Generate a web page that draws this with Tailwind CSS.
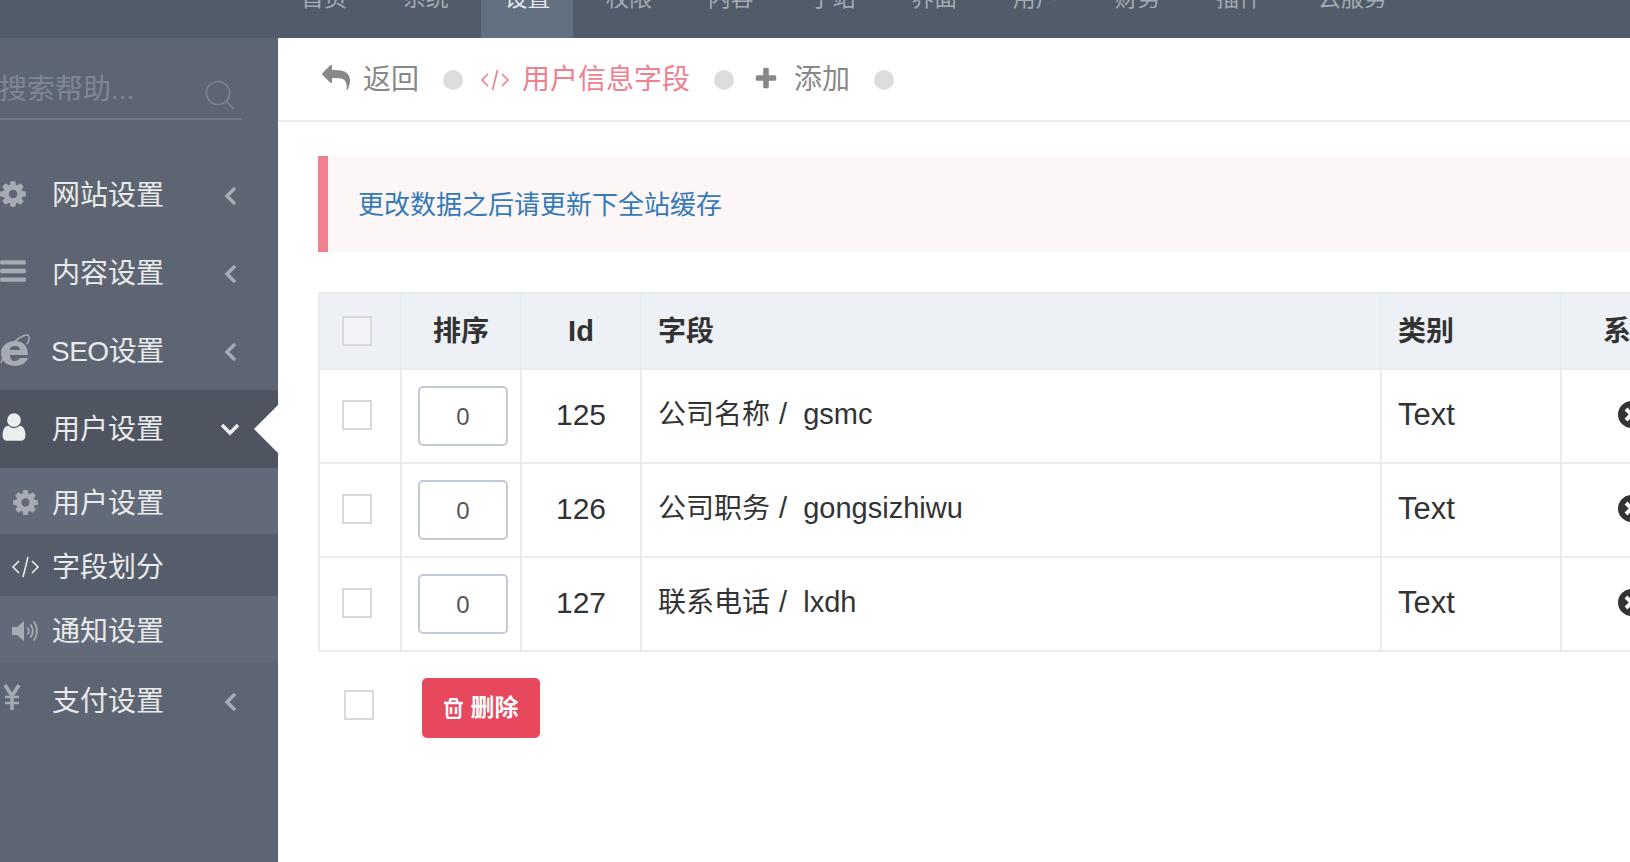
<!DOCTYPE html>
<html lang="zh-CN">
<head>
<meta charset="utf-8">
<title>用户信息字段</title>
<script src="https://cdn.jsdelivr.net/npm/@tailwindcss/browser@4"></script>
</head>
<body class="m-0 bg-white">
<div class="flex flex-col w-[1630px] h-[862px] overflow-hidden font-['Liberation_Sans','Noto_Sans_CJK_SC',sans-serif]">
  <header class="flex h-[38px] shrink-0 overflow-hidden bg-[#515b6a] pl-[278px] gap-[9.7px] text-[23px] text-[#a3aab4]">
    <a class="px-[23px] h-full whitespace-nowrap"><span class="block -mt-[13px] leading-[23px]">首页</span></a>
    <a class="px-[23px] h-full whitespace-nowrap"><span class="block -mt-[13px] leading-[23px]">系统</span></a>
    <a class="px-[23px] h-full whitespace-nowrap bg-[#627082] text-[#e4e6e9]"><span class="block -mt-[13px] leading-[23px]">设置</span></a>
    <a class="px-[23px] h-full whitespace-nowrap"><span class="block -mt-[13px] leading-[23px]">权限</span></a>
    <a class="px-[23px] h-full whitespace-nowrap"><span class="block -mt-[13px] leading-[23px]">内容</span></a>
    <a class="px-[23px] h-full whitespace-nowrap"><span class="block -mt-[13px] leading-[23px]">子站</span></a>
    <a class="px-[23px] h-full whitespace-nowrap"><span class="block -mt-[13px] leading-[23px]">界面</span></a>
    <a class="px-[23px] h-full whitespace-nowrap"><span class="block -mt-[13px] leading-[23px]">用户</span></a>
    <a class="px-[23px] h-full whitespace-nowrap"><span class="block -mt-[13px] leading-[23px]">财务</span></a>
    <a class="px-[23px] h-full whitespace-nowrap"><span class="block -mt-[13px] leading-[23px]">插件</span></a>
    <a class="px-[23px] h-full whitespace-nowrap"><span class="block -mt-[13px] leading-[23px]">云服务</span></a>
  </header>
  <div class="flex flex-1 min-h-0">
    <aside class="w-[278px] shrink-0 bg-[#5e6572] text-[28px] text-[#e8e9eb]">
      <div class="h-[118px] pt-[30px]">
        <div class="flex items-center justify-between w-[242px] h-[52px] border-b-2 border-[#6f7785] pr-[7px]">
          <span class="text-[#7f8794] leading-[40px] -mt-[6px] -ml-[1px]">搜索帮助...</span>
          <svg class="w-[30px] h-[30px] mt-[3px]" viewBox="0 0 30 30" fill="none" stroke="#7c8490" stroke-width="1.5"><circle cx="13" cy="13" r="11.500"/><line x1="21.500" y1="21.500" x2="29" y2="29"/></svg>
        </div>
      </div>
      <a class="flex items-center h-[78px]">
        <span class="w-[52px] shrink-0"><svg class="w-[30px] h-[30px] -ml-[2px] -mt-[3px]" viewBox="0 0 1792 1792" fill="#a6abb4"><path d="M1152 896q0-106-75-181t-181-75-181 75-75 181 75 181 181 75 181-75 75-181zm512-109v222q0 12-8 23t-20 13l-185 28q-19 54-39 91 35 50 107 138 10 12 10 25t-9 23q-27 37-99 108t-94 71q-12 0-26-9l-138-108q-44 23-91 38-16 136-29 186-7 28-36 28h-222q-14 0-24.500-8.500t-11.500-21.500l-28-184q-49-16-90-37l-141 107q-10 9-25 9-14 0-25-11-126-114-165-168-7-10-7-23 0-12 8-23 15-21 51-66.500t54-70.500q-27-50-41-99l-183-27q-13-2-21-12.500t-8-23.500v-222q0-12 8-23t19-13l186-28q14-46 39-92-40-57-107-138-10-12-10-24 0-10 9-23 26-36 98.500-107.500t94.500-71.500q13 0 26 10l138 107q44-23 91-38 16-136 29-186 7-28 36-28h222q14 0 24.500 8.500t11.500 21.500l28 184q49 16 90 37l142-107q9-9 24-9 13 0 25 10 129 119 165 170 7 8 7 22 0 12-8 23-15 21-51 66.500t-54 70.500q26 50 41 98l183 28q13 2 21 12.500t8 23.500z"/></svg></span>
        <span class="flex-1 leading-[40px] mt-[2px]">网站设置</span>
        <svg class="w-[13px] h-[20px] mr-[41px] mt-[2px]" viewBox="0 0 13 20" fill="none" stroke="#a6abb4" stroke-width="3.500"><polyline points="11,2 3,10 11,18"/></svg>
      </a>
      <a class="flex items-center h-[78px]">
        <span class="w-[52px] shrink-0"><svg class="w-[30px] h-[30px] -ml-[2px] -mt-[4px]" viewBox="0 0 1792 1792" fill="#a6abb4"><path d="M1664 1344v128q0 26-19 45t-45 19h-1408q-26 0-45-19t-19-45v-128q0-26 19-45t45-19h1408q26 0 45 19t19 45zm0-512v128q0 26-19 45t-45 19h-1408q-26 0-45-19t-19-45v-128q0-26 19-45t45-19h1408q26 0 45 19t19 45zm0-512v128q0 26-19 45t-45 19h-1408q-26 0-45-19t-19-45v-128q0-26 19-45t45-19h1408q26 0 45 19t19 45z"/></svg></span>
        <span class="flex-1 leading-[40px] mt-[2px]">内容设置</span>
        <svg class="w-[13px] h-[20px] mr-[41px] mt-[2px]" viewBox="0 0 13 20" fill="none" stroke="#a6abb4" stroke-width="3.500"><polyline points="11,2 3,10 11,18"/></svg>
      </a>
      <a class="flex items-center h-[78px]">
        <span class="w-[51px] shrink-0"><svg class="w-[30px] h-[34px] -mt-[2px]" viewBox="0 0 30 34"><path fill="#a6abb4" fill-rule="evenodd" d="M28 22C28 12 22 8 15 8C7 8 1 13 1 20C1 28 7 33 15 33C21 33 26 30 28 25H20C19 27 17 28 15 28C12 28 10 26 10 22ZM10 17C10 14 12 13 15 13C18 13 20 14 20 17Z"/><path fill="none" stroke="#a6abb4" stroke-width="1.500" d="M1 30C6 14 18 4 26 2C30 1 30 7 27 11"/></svg></span>
        <span class="flex-1 leading-[40px] mt-[2px] tracking-[-0.5px]">SEO设置</span>
        <svg class="w-[13px] h-[20px] mr-[41px] mt-[2px]" viewBox="0 0 13 20" fill="none" stroke="#a6abb4" stroke-width="3.500"><polyline points="11,2 3,10 11,18"/></svg>
      </a>
      <a class="relative flex items-center h-[78px] bg-[#4e5560]">
        <span class="w-[52px] shrink-0"><svg class="w-[32px] h-[32px] -ml-[2px] -mt-[4px]" viewBox="0 0 1792 1792" fill="#eceded"><path d="M1536 1399q0 109-62.500 187t-150.500 78h-854q-88 0-150.500-78t-62.500-187q0-85 8.500-160.500t31.500-152 58.500-131 94-89 134.500-34.500q131 128 313 128t313-128q76 0 134.500 34.500t94 89 58.500 131 31.500 152 8.500 160.500zm-256-887q0 159-112.500 271.500t-271.500 112.500-271.500-112.500-112.500-271.500 112.500-271.500 271.500-112.500 271.500 112.500 112.500 271.500z"/></svg></span>
        <span class="flex-1 leading-[40px] mt-[2px]">用户设置</span>
        <svg class="w-[20px] h-[14px] mr-[38px]" viewBox="0 0 20 14" fill="none" stroke="#f1f1f1" stroke-width="3.500"><polyline points="2,3 10,11 18,3"/></svg>
        <span class="absolute right-0 top-[15px] w-0 h-0 border-y-[24px] border-y-transparent border-r-[24px] border-r-white"></span>
      </a>
      <a class="flex items-center h-[66px] pt-[5px] bg-[#626978]">
        <span class="w-[52px] shrink-0 pl-[11px]"><svg class="w-[29px] h-[29px] -mt-[3px]" viewBox="0 0 1792 1792" fill="#a6abb4"><path d="M1152 896q0-106-75-181t-181-75-181 75-75 181 75 181 181 75 181-75 75-181zm512-109v222q0 12-8 23t-20 13l-185 28q-19 54-39 91 35 50 107 138 10 12 10 25t-9 23q-27 37-99 108t-94 71q-12 0-26-9l-138-108q-44 23-91 38-16 136-29 186-7 28-36 28h-222q-14 0-24.500-8.500t-11.500-21.500l-28-184q-49-16-90-37l-141 107q-10 9-25 9-14 0-25-11-126-114-165-168-7-10-7-23 0-12 8-23 15-21 51-66.500t54-70.500q-27-50-41-99l-183-27q-13-2-21-12.500t-8-23.500v-222q0-12 8-23t19-13l186-28q14-46 39-92-40-57-107-138-10-12-10-24 0-10 9-23 26-36 98.500-107.500t94.500-71.500q13 0 26 10l138 107q44-23 91-38 16-136 29-186 7-28 36-28h222q14 0 24.500 8.500t11.500 21.500l28 184q49 16 90 37l142-107q9-9 24-9 13 0 25 10 129 119 165 170 7 8 7 22 0 12-8 23-15 21-51 66.500t-54 70.500q26 50 41 98l183 28q13 2 21 12.500t8 23.500z"/></svg></span>
        <span class="leading-[40px]">用户设置</span>
      </a>
      <a class="flex items-center h-[62px] pt-[5px] bg-[#565d6a]">
        <span class="w-[52px] shrink-0 pl-[11px]"><svg class="w-[29px] h-[22px] -mt-[2px]" viewBox="0 0 29 22" fill="none" stroke="#eceded" stroke-width="1.600"><polyline points="8,5 2,11 8,17"/><polyline points="21,5 27,11 21,17"/><line x1="17" y1="1" x2="12" y2="21"/></svg></span>
        <span class="leading-[40px]">字段划分</span>
      </a>
      <a class="flex items-center h-[66px] pt-[5px] bg-[#626978]">
        <span class="w-[52px] shrink-0 pl-[12px]"><svg class="w-[27px] h-[24px] -mt-[2px]" viewBox="0 0 27 24" fill="none" stroke="#a6abb4"><path d="M0 8H5L12 2V22L5 16H0Z" fill="#a6abb4" stroke="none"/><path d="M15.500 8.500C17 10.500 17 13.500 15.500 15.500" stroke-width="1.800"/><path d="M18.500 5.500C21.500 9 21.500 15 18.500 18.500" stroke-width="1.800"/><path d="M21.500 2.500C26 7.500 26 16.500 21.500 21.500" stroke-width="1.800"/></svg></span>
        <span class="leading-[40px]">通知设置</span>
      </a>
      <a class="flex items-center h-[78px]">
        <span class="w-[52px] shrink-0 pl-[3px]"><svg class="w-[18px] h-[26px] -mt-[8px]" viewBox="0 0 18 26" fill="none" stroke="#a6abb4" stroke-width="3.500"><polyline points="2,1 9,12 16,1"/><line x1="9" y1="11" x2="9" y2="26"/><line x1="2" y1="13" x2="16" y2="13" stroke-width="2.500"/><line x1="2" y1="19" x2="16" y2="19" stroke-width="2.500"/></svg></span>
        <span class="flex-1 leading-[40px] mt-[2px]">支付设置</span>
        <svg class="w-[13px] h-[20px] mr-[41px] mt-[2px]" viewBox="0 0 13 20" fill="none" stroke="#a6abb4" stroke-width="3.500"><polyline points="11,2 3,10 11,18"/></svg>
      </a>
    </aside>
    <main class="flex-1 min-w-0 overflow-hidden">
      <nav class="flex items-center h-[84px] border-b-2 border-[#e7ecf1] pl-[43px] pt-[1px] text-[28px] text-[#888888]">
        <svg class="w-[28px] h-[28px] -mt-[4px] ml-[1px]" viewBox="0 0 1792 1792" fill="#888888"><path d="M1792 1120q0 166-127 451-3 7-10.500 24t-13.500 30-13 22q-12 17-28 17-15 0-23.500-10t-8.500-25q0-9 2.500-26.500t2.500-23.500q5-68 5-123 0-101-17.500-181t-48.500-138.500-80-101-105.500-69.500-133-42.500-154-21.500-175.500-6h-224v256q0 26-19 45t-45 19-45-19l-512-512q-19-19-19-45t19-45l512-512q19-19 45-19t45 19 19 45v256h224q713 0 875 403 53 134 53 333z"/></svg>
        <span class="ml-[13px] leading-[40px]">返回</span>
        <span class="ml-[24px] w-[20px] h-[20px] rounded-full bg-[#dddddd]"></span>
        <svg class="ml-[17px] w-[30px] h-[22px]" viewBox="0 0 30 22" fill="none" stroke="#f0808f" stroke-width="1.700"><polyline points="8,5 2,11 8,17"/><polyline points="22,5 28,11 22,17"/><line x1="17.500" y1="1" x2="12.500" y2="21"/></svg>
        <span class="ml-[12px] leading-[40px] text-[#f0808f]">用户信息字段</span>
        <span class="ml-[24px] w-[20px] h-[20px] rounded-full bg-[#dddddd]"></span>
        <svg class="ml-[19px] w-[26px] h-[26px] -mt-[2px]" viewBox="0 0 1792 1792" fill="#888888"><path d="M1600 736v192q0 40-28 68t-68 28h-416v416q0 40-28 68t-68 28h-192q-40 0-68-28t-28-68v-416h-416q-40 0-68-28t-28-68v-192q0-40 28-68t68-28h416v-416q0-40 28-68t68-28h192q40 0 68 28t28 68v416h416q40 0 68 28t28 68z"/></svg>
        <span class="ml-[15px] leading-[40px]">添加</span>
        <span class="ml-[24px] w-[20px] h-[20px] rounded-full bg-[#dddddd]"></span>
      </nav>
      <div class="flex items-center mt-[34px] ml-[40px] h-[96px] border-l-[10px] border-[#f0808f] bg-[#fdf6f6] pl-[30px] pt-[3px] text-[26px] text-[#337ab7]">更改数据之后请更新下全站缓存</div>
      <table class="mt-[40px] ml-[40px] w-[1422px] table-fixed border-collapse text-[28px] text-[#333333]">
        <colgroup>
          <col class="w-[82px]"><col class="w-[120px]"><col class="w-[120px]"><col class="w-[740px]"><col class="w-[180px]"><col class="w-[180px]">
        </colgroup>
        <thead>
          <tr class="h-[76px] bg-[#edf1f6]">
            <th class="border-2 border-[#e7ecf1]"><input type="checkbox" class="appearance-none block ml-[22px] w-[30px] h-[30px] border-2 border-[#d9d9d9] bg-[#f1f3f6]"></th>
            <th class="border-2 border-[#e7ecf1] text-center font-bold pt-[2px]">排序</th>
            <th class="border-2 border-[#e7ecf1] text-center font-bold text-[29px] pt-[2px]">Id</th>
            <th class="border-2 border-[#e7ecf1] text-left pl-[16px] font-bold pt-[2px]">字段</th>
            <th class="border-2 border-[#e7ecf1] text-left pl-[16px] font-bold pt-[2px]">类别</th>
            <th class="border-2 border-[#e7ecf1] text-left pl-[41px] font-bold whitespace-nowrap pt-[2px]">系统</th>
          </tr>
        </thead>
        <tbody>
          <tr class="h-[94px]">
            <td class="border-2 border-[#e7ecf1]"><input type="checkbox" class="appearance-none block ml-[22px] w-[30px] h-[30px] -mt-[2px] border-2 border-[#d9d9d9]"></td>
            <td class="border-2 border-[#e7ecf1] pl-[16px]"><input value="0" class="block w-[90px] h-[60px] rounded-[5px] border-2 border-[#c2cad8] pt-[2px] text-center text-[24px] text-[#555555]"></td>
            <td class="border-2 border-[#e7ecf1] text-center text-[30px] pb-[4px]">125</td>
            <td class="border-2 border-[#e7ecf1] pl-[16px] pb-[3px]">公司名称<span class="text-[29px] pl-[1px]"> <span class="mr-[8px]">/</span> gsmc</span></td>
            <td class="border-2 border-[#e7ecf1] pl-[16px] text-[31px] pb-[2px]">Text</td>
            <td class="border-2 border-[#e7ecf1] pl-[56px] pb-[3px]"><svg class="w-[27px] h-[27px]" viewBox="0 0 27 27"><circle cx="13.500" cy="13.500" r="13.500" fill="#333333"/><path d="M8 8L19 19M19 8L8 19" stroke="#ffffff" stroke-width="4"/></svg></td>
          </tr>
          <tr class="h-[94px]">
            <td class="border-2 border-[#e7ecf1]"><input type="checkbox" class="appearance-none block ml-[22px] w-[30px] h-[30px] -mt-[2px] border-2 border-[#d9d9d9]"></td>
            <td class="border-2 border-[#e7ecf1] pl-[16px]"><input value="0" class="block w-[90px] h-[60px] rounded-[5px] border-2 border-[#c2cad8] pt-[2px] text-center text-[24px] text-[#555555]"></td>
            <td class="border-2 border-[#e7ecf1] text-center text-[30px] pb-[4px]">126</td>
            <td class="border-2 border-[#e7ecf1] pl-[16px] pb-[3px]">公司职务<span class="text-[29px] pl-[1px]"> <span class="mr-[8px]">/</span> gongsizhiwu</span></td>
            <td class="border-2 border-[#e7ecf1] pl-[16px] text-[31px] pb-[2px]">Text</td>
            <td class="border-2 border-[#e7ecf1] pl-[56px] pb-[3px]"><svg class="w-[27px] h-[27px]" viewBox="0 0 27 27"><circle cx="13.500" cy="13.500" r="13.500" fill="#333333"/><path d="M8 8L19 19M19 8L8 19" stroke="#ffffff" stroke-width="4"/></svg></td>
          </tr>
          <tr class="h-[94px]">
            <td class="border-2 border-[#e7ecf1]"><input type="checkbox" class="appearance-none block ml-[22px] w-[30px] h-[30px] -mt-[2px] border-2 border-[#d9d9d9]"></td>
            <td class="border-2 border-[#e7ecf1] pl-[16px]"><input value="0" class="block w-[90px] h-[60px] rounded-[5px] border-2 border-[#c2cad8] pt-[2px] text-center text-[24px] text-[#555555]"></td>
            <td class="border-2 border-[#e7ecf1] text-center text-[30px] pb-[4px]">127</td>
            <td class="border-2 border-[#e7ecf1] pl-[16px] pb-[3px]">联系电话<span class="text-[29px] pl-[1px]"> <span class="mr-[8px]">/</span> lxdh</span></td>
            <td class="border-2 border-[#e7ecf1] pl-[16px] text-[31px] pb-[2px]">Text</td>
            <td class="border-2 border-[#e7ecf1] pl-[56px] pb-[3px]"><svg class="w-[27px] h-[27px]" viewBox="0 0 27 27"><circle cx="13.500" cy="13.500" r="13.500" fill="#333333"/><path d="M8 8L19 19M19 8L8 19" stroke="#ffffff" stroke-width="4"/></svg></td>
          </tr>
        </tbody>
      </table>
      <div class="flex items-center mt-[26px] ml-[66px] gap-[48px]">
        <input type="checkbox" class="appearance-none block w-[30px] h-[30px] -mt-[6px] border-2 border-[#d9d9d9]">
        <button class="flex items-center justify-center gap-[8px] w-[118px] h-[60px] rounded-[5px] bg-[#e7485d] text-white text-[24px] font-bold">
          <svg class="w-[19px] h-[21px]" viewBox="0 0 19 21" fill="none" stroke="#ffffff" stroke-width="2.600"><path d="M0 5H19M6 5V2.500C6 1.500 6.500 1 7.500 1H11.500C12.500 1 13 1.500 13 2.500V5M3 5V18C3 19.200 3.800 20 5 20H14C15.200 20 16 19.200 16 18V5M7 9V16M12 9V16"/></svg>
          <span>删除</span>
        </button>
      </div>
    </main>
  </div>
</div>
</body>
</html>
